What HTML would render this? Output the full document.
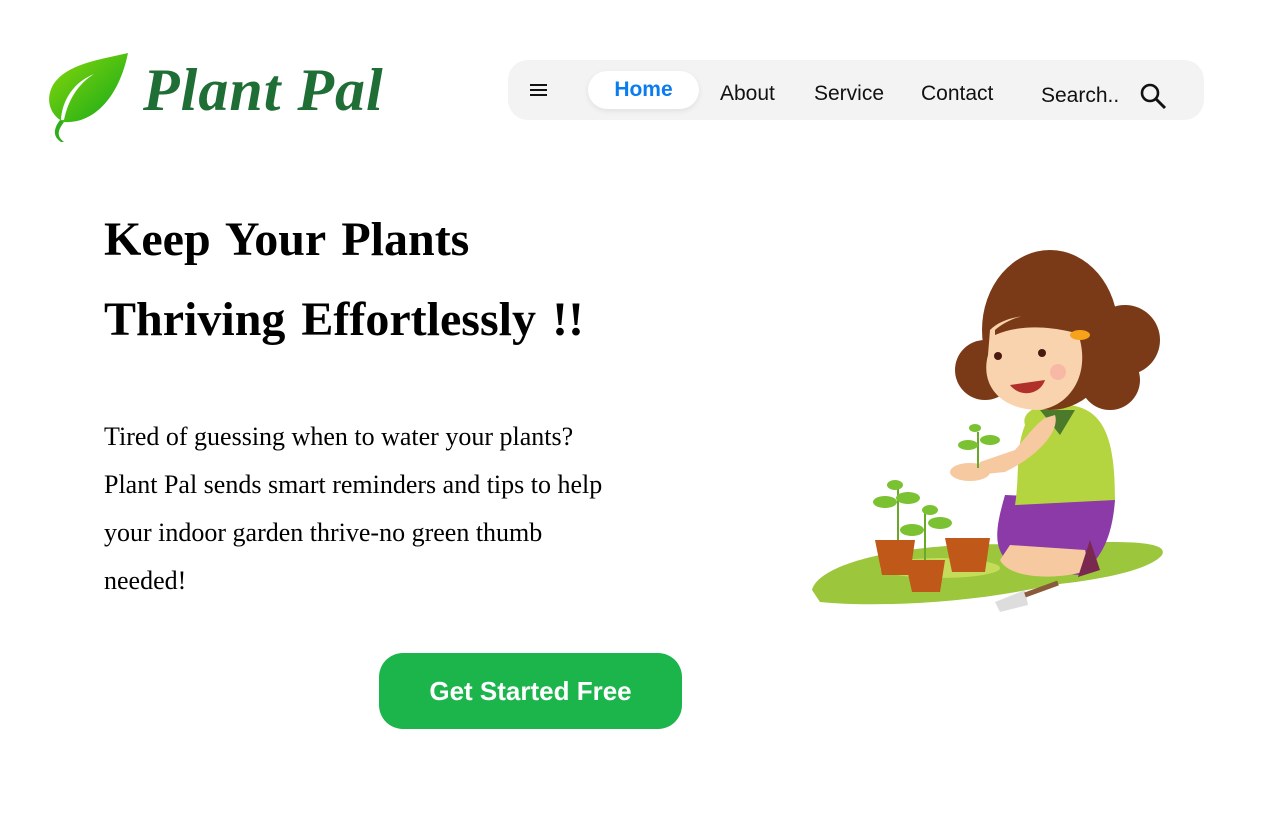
<!DOCTYPE html>
<html><head><meta charset="utf-8"><style>
*{margin:0;padding:0;box-sizing:border-box}
body{width:1280px;height:832px;background:#fff;position:relative;overflow:hidden;font-family:"Liberation Sans",sans-serif}
.abs{position:absolute}
.logo{left:143px;top:56px;font-family:"Liberation Serif",serif;font-style:italic;font-weight:bold;font-size:60px;color:#1f6e36;letter-spacing:1px;white-space:nowrap}
.nav{left:508px;top:60px;width:696px;height:60px;background:#f3f3f3;border-radius:20px}
.nav span{position:absolute;font-size:21px;color:#111;top:22px}
.home{left:80px;top:11px;width:111px;height:38px;background:#fff;border-radius:19px;box-shadow:0 2px 6px rgba(0,0,0,.08);color:#0a7cf0;font-weight:bold;font-size:21px;text-align:center;line-height:38px}
h1{position:absolute;left:104px;font-family:"Liberation Serif",serif;font-weight:bold;font-size:48px;color:#000;word-spacing:4px;white-space:nowrap}
.p{left:104px;top:413px;width:600px;font-family:"Liberation Serif",serif;font-size:26px;line-height:48px;color:#000;white-space:nowrap}
.btn{left:379px;top:653px;width:303px;height:76px;background:#1bb54c;border-radius:24px;color:#fff;font-weight:bold;font-size:26px;text-align:center;line-height:76px}
</style></head><body>
<svg class="abs" style="left:44px;top:52px" width="86" height="92" viewBox="0 0 86 92">
<defs><linearGradient id="g" x1="0" y1="0" x2="1" y2="1"><stop offset="0" stop-color="#8ad80a"/><stop offset="1" stop-color="#12a81a"/></linearGradient></defs>
<path d="M84 1 C55 8 20 12 8 35 C0 52 10 66 20 70 C50 72 75 45 84 1Z" fill="url(#g)"/>
<path d="M20 70 C14 78 12 84 20 90 L17 90 C8 84 10 76 16 68Z" fill="#2fae1c"/>
<path d="M17 68 C18 48 30 30 50 22 C34 32 24 48 20 68Z" fill="#fff"/>
</svg>
<div class="abs logo">Plant Pal</div>
<div class="abs nav">
<svg class="abs" style="left:21px;top:23px" width="19" height="14"><path d="M1 2H18M1 7H18M1 12H18" stroke="#111" stroke-width="2"/></svg>
<div class="abs home">Home</div>
<span style="left:212px">About</span>
<span style="left:306px">Service</span>
<span style="left:413px">Contact</span>
<span style="left:533px;top:24px">Search..</span>
<svg class="abs" style="left:631px;top:22px" width="28" height="28"><circle cx="11" cy="11" r="8" fill="none" stroke="#111" stroke-width="2.6"/><path d="M17 17L26 26" stroke="#111" stroke-width="3"/></svg>
</div>
<h1 style="top:212px">Keep Your Plants</h1>
<h1 style="top:292px">Thriving Effortlessly !!</h1>
<div class="abs p">Tired of guessing when to water your plants?<br>Plant Pal sends smart reminders and tips to help<br>your indoor garden thrive-no green thumb<br>needed!</div>
<div class="abs btn">Get Started Free</div>
<svg class="abs" style="left:800px;top:240px" width="380" height="380" viewBox="0 0 380 380">
<path d="M12 350 C20 320 120 300 230 305 C320 300 370 300 362 315 C350 330 300 340 250 345 C180 362 80 368 20 362Z" fill="#9cc63c"/>
<ellipse cx="140" cy="328" rx="60" ry="10" fill="#c5dc5a"/>
<path d="M205 255 C195 290 190 315 220 330 L280 335 C300 320 312 300 315 260Z" fill="#8b3aa8"/>
<path d="M200 320 C210 340 260 340 290 330 L285 310 L210 305Z" fill="#f7c9a0"/>
<path d="M290 300 L300 330 L278 337Z" fill="#7a2850"/>
<path d="M225 185 C220 170 245 160 270 165 C305 170 315 200 315 260 L215 265 C220 235 215 210 225 185Z" fill="#b5d540"/>
<path d="M240 170 L260 195 L275 170Z" fill="#4a7a2a"/>
<path d="M255 175 C260 190 240 215 205 232 L175 235 L180 222 L215 210 C228 195 235 185 245 178Z" fill="#f7c9a0"/>
<ellipse cx="170" cy="232" rx="20" ry="9" fill="#f7c9a0"/>
<path d="M178 228 L178 192" stroke="#6aa82c" stroke-width="2"/>
<ellipse cx="168" cy="205" rx="10" ry="5" fill="#7bc232"/><ellipse cx="190" cy="200" rx="10" ry="5" fill="#7bc232"/><ellipse cx="175" cy="188" rx="6" ry="4" fill="#7bc232"/>
<ellipse cx="250" cy="90" rx="68" ry="80" fill="#7a3a17"/>
<circle cx="185" cy="130" r="30" fill="#7a3a17"/><circle cx="325" cy="100" r="35" fill="#7a3a17"/><circle cx="310" cy="140" r="30" fill="#7a3a17"/>
<path d="M190 90 C210 70 260 70 280 100 C290 140 265 170 235 170 C200 168 180 145 188 115Z" fill="#f9d3ad"/>
<path d="M195 90 C225 65 270 70 300 100 C270 90 230 80 195 95Z" fill="#7a3a17"/>
<circle cx="198" cy="116" r="4" fill="#4a1a10"/><circle cx="242" cy="113" r="4" fill="#4a1a10"/>
<path d="M210 145 C220 158 240 155 245 140Z" fill="#b0302a"/>
<circle cx="258" cy="132" r="8" fill="#f5a8a0" opacity=".6"/>
<ellipse cx="280" cy="95" rx="10" ry="5" fill="#f6a21a"/>
<path d="M75 300 L115 300 L110 335 L82 335Z" fill="#c0581a"/><path d="M105 320 L145 320 L140 352 L112 352Z" fill="#c0581a"/><path d="M145 298 L190 298 L185 332 L152 332Z" fill="#c0581a"/>
<path d="M98 300 L98 245 M125 320 L125 270" stroke="#6aa82c" stroke-width="2"/>
<ellipse cx="85" cy="262" rx="12" ry="6" fill="#7bc232"/><ellipse cx="108" cy="258" rx="12" ry="6" fill="#7bc232"/><ellipse cx="95" cy="245" rx="8" ry="5" fill="#7bc232"/>
<ellipse cx="112" cy="290" rx="12" ry="6" fill="#7bc232"/><ellipse cx="140" cy="283" rx="12" ry="6" fill="#7bc232"/><ellipse cx="130" cy="270" rx="8" ry="5" fill="#7bc232"/>
<path d="M195 362 L225 350 L228 365 L200 372Z" fill="#ddd"/><path d="M225 355 L258 343" stroke="#8a5a3a" stroke-width="5"/>
</svg>
</body></html>
